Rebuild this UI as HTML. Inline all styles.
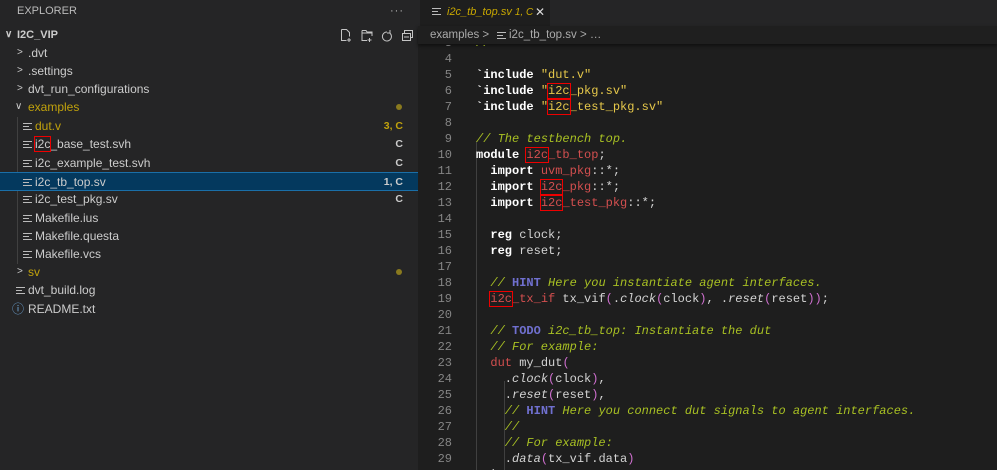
<!DOCTYPE html>
<html><head><meta charset="utf-8"><style>
*{margin:0;padding:0;box-sizing:border-box}
body{width:997px;height:470px;overflow:hidden;background:#1e1e1e;font-family:"Liberation Sans",sans-serif;position:relative}
#side{position:absolute;left:0;top:0;width:418px;height:470px;background:#252526;color:#cccccc;font-size:12px}
.row{position:absolute;left:0;width:418px;height:18px;line-height:18px;white-space:nowrap}
.row span.t{position:absolute}
.badge{position:absolute;right:15px;font-size:10.5px;font-weight:bold}
.dot{position:absolute;right:16px;top:6px;width:6px;height:6px;border-radius:50%;background:#8a7a1e}
.fi{position:absolute;top:6px;width:9px;height:7px;border-top:1px solid #bbb;border-bottom:1px solid #bbb}
.fi:after{content:"";position:absolute;left:0;top:2px;width:6px;height:1px;background:#bbb}
.chev{position:absolute;font-size:10px;color:#ccc}
.box{outline:1.5px solid #e00;outline-offset:0}
#ed{position:absolute;left:418px;top:0;right:0;bottom:0;background:#1e1e1e}
#tabs{position:absolute;left:0;top:0;right:0;height:26px;background:#252526}
#tab{position:absolute;left:2px;top:0;width:130px;height:26px;background:#1e1e1e;font-size:11px;line-height:24px;color:#c9a800}
#bc{position:absolute;left:0;top:26px;right:0;height:18px;background:#1f1f1f;font-size:11.5px;line-height:18px;color:#aaa;box-shadow:0 2px 3px #111}
#code{position:absolute;left:0;top:45px;right:0;bottom:0;overflow:hidden;font-family:"Liberation Mono",monospace;font-size:12px}
.l{position:absolute;left:0;width:579px;height:16px;line-height:16px;white-space:pre;color:#d4d4d4}
.n{position:absolute;left:0;width:34px;text-align:right;color:#858585}
.c{position:absolute;left:58px}
.k{color:#fff;font-weight:bold}
.s{color:#e6c84a}
.cm{color:#a8c023;font-style:italic}
.h{color:#7070d0;font-style:normal;font-weight:bold}
.r{color:#d34f4f}
.p{color:#d070d0}
.i{font-style:italic;color:#d4d4d4}
.g{position:absolute;width:1px;background:#404040}
</style></head><body>
<div id="side">
 <div class="row" style="top:2px;font-size:11px;color:#bbb"><span class="t" style="left:17px">EXPLORER</span><span class="t" style="left:390px;letter-spacing:1px">···</span></div>
 <div class="row" style="top:26px;font-size:11px;font-weight:bold"><span class="chev" style="left:5px">∨</span><span class="t" style="left:17px">I2C_VIP</span>
  <svg style="position:absolute;left:340px;top:3px" width="75" height="13" viewBox="0 0 75 13" fill="none" stroke="#c5c5c5" stroke-width="1"><path d="M1.5 .5h5l3 3v4M1.5.5v11h5M9 9v4M7 11h4"/><path d="M22 1.5h4l1 1.5h5v4M22 1.5v10h5M29.5 9v4M27.5 11h4M22 4h10"/><path d="M47 3a4.5 4.5 0 1 0 3 1.2M50 1v3h-3"/><path d="M62.5 4.5h8v7h-8zM64.5 4.5v-3h8v7h-2M64 8h5"/></svg></div>
 <div class="row" style="top:44px"><span class="chev" style="left:17px">&gt;</span><span class="t" style="left:28px">.dvt</span></div>
 <div class="row" style="top:62px"><span class="chev" style="left:17px">&gt;</span><span class="t" style="left:28px">.settings</span></div>
 <div class="row" style="top:80px"><span class="chev" style="left:17px">&gt;</span><span class="t" style="left:28px">dvt_run_configurations</span></div>
 <div class="row" style="top:98px;color:#c1a20c"><span class="chev" style="left:15px;color:#ccc">∨</span><span class="t" style="left:28px">examples</span><span class="dot"></span></div>
 <div class="g" style="left:17px;top:117px;height:147px"></div>
 <div class="row" style="top:117px;color:#c1a20c"><span class="fi" style="left:23px"></span><span class="t" style="left:35px">dut.v</span><span class="badge" style="color:#c1a20c">3, C</span></div>
 <div class="row" style="top:135px"><span class="fi" style="left:23px"></span><span class="t" style="left:35px"><span class="box">i2c</span>_base_test.svh</span><span class="badge">C</span></div>
 <div class="row" style="top:154px"><span class="fi" style="left:23px"></span><span class="t" style="left:35px">i2c_example_test.svh</span><span class="badge">C</span></div>
 <div class="row" style="top:172px;height:19px;background:#04395e;border-top:1px solid #1a6fa8;border-bottom:1px solid #1a6fa8"><span class="fi" style="left:23px"></span><span class="t" style="left:35px">i2c_tb_top.sv</span><span class="badge">1, C</span></div>
 <div class="row" style="top:190px"><span class="fi" style="left:23px"></span><span class="t" style="left:35px">i2c_test_pkg.sv</span><span class="badge">C</span></div>
 <div class="row" style="top:209px"><span class="fi" style="left:23px"></span><span class="t" style="left:35px">Makefile.ius</span></div>
 <div class="row" style="top:227px"><span class="fi" style="left:23px"></span><span class="t" style="left:35px">Makefile.questa</span></div>
 <div class="row" style="top:245px"><span class="fi" style="left:23px"></span><span class="t" style="left:35px">Makefile.vcs</span></div>
 <div class="row" style="top:263px;color:#c1a20c"><span class="chev" style="left:17px;color:#ccc">&gt;</span><span class="t" style="left:28px">sv</span><span class="dot"></span></div>
 <div class="row" style="top:281px"><span class="fi" style="left:16px"></span><span class="t" style="left:28px">dvt_build.log</span></div>
 <div class="row" style="top:300px"><span class="t" style="left:12px;font-size:12px;color:#6fa8dc">ⓘ</span><span class="t" style="left:28px">README.txt</span></div>
</div>
<div id="ed">
 <div id="tabs"><div id="tab"><span class="fi" style="left:12px;top:8px"></span><span style="position:absolute;left:27px;font-style:italic">i2c_tb_top.sv <span style="font-size:10px">1, C</span></span><span style="position:absolute;left:115px;color:#ddd;font-size:12px">✕</span></div></div>
 <div id="bc"><span style="position:absolute;left:12px">examples &gt;</span><span class="fi" style="left:79px;top:6px"></span><span style="position:absolute;left:91px">i2c_tb_top.sv &gt; …</span></div>
 <div id="code">
  <div class="g" style="left:58px;top:96px;height:340px"></div>
  <div class="g" style="left:86px;top:336px;height:90px"></div>
  <div class="l" style="top:-10px"><span class="n">3</span><span class="c cm">//</span></div>
  <div class="l" style="top:6px"><span class="n">4</span></div>
  <div class="l" style="top:22px"><span class="n">5</span><span class="c"><span class="k">`include</span> <span class="s">"dut.v"</span></span></div>
  <div class="l" style="top:38px"><span class="n">6</span><span class="c"><span class="k">`include</span> <span class="s">"<span class="box">i2c</span>_pkg.sv"</span></span></div>
  <div class="l" style="top:54px"><span class="n">7</span><span class="c"><span class="k">`include</span> <span class="s">"<span class="box">i2c</span>_test_pkg.sv"</span></span></div>
  <div class="l" style="top:70px"><span class="n">8</span></div>
  <div class="l" style="top:86px"><span class="n">9</span><span class="c cm">// The testbench top.</span></div>
  <div class="l" style="top:102px"><span class="n">10</span><span class="c"><span class="k">module</span> <span class="r"><span class="box">i2c</span>_tb_top</span>;</span></div>
  <div class="l" style="top:118px"><span class="n">11</span><span class="c">  <span class="k">import</span> <span class="r">uvm_pkg</span>::*;</span></div>
  <div class="l" style="top:134px"><span class="n">12</span><span class="c">  <span class="k">import</span> <span class="r"><span class="box">i2c</span>_pkg</span>::*;</span></div>
  <div class="l" style="top:150px"><span class="n">13</span><span class="c">  <span class="k">import</span> <span class="r"><span class="box">i2c</span>_test_pkg</span>::*;</span></div>
  <div class="l" style="top:166px"><span class="n">14</span></div>
  <div class="l" style="top:182px"><span class="n">15</span><span class="c">  <span class="k">reg</span> clock;</span></div>
  <div class="l" style="top:198px"><span class="n">16</span><span class="c">  <span class="k">reg</span> reset;</span></div>
  <div class="l" style="top:214px"><span class="n">17</span></div>
  <div class="l" style="top:230px"><span class="n">18</span><span class="c cm">  // <span class="h">HINT</span> Here you instantiate agent interfaces.</span></div>
  <div class="l" style="top:246px"><span class="n">19</span><span class="c">  <span class="r"><span class="box">i2c</span>_tx_if</span> tx_vif<span class="p">(</span>.<span class="i">clock</span><span class="p">(</span>clock<span class="p">)</span>, .<span class="i">reset</span><span class="p">(</span>reset<span class="p">)</span><span class="p">)</span>;</span></div>
  <div class="l" style="top:262px"><span class="n">20</span></div>
  <div class="l" style="top:278px"><span class="n">21</span><span class="c cm">  // <span class="h">TODO</span> i2c_tb_top: Instantiate the dut</span></div>
  <div class="l" style="top:294px"><span class="n">22</span><span class="c cm">  // For example:</span></div>
  <div class="l" style="top:310px"><span class="n">23</span><span class="c">  <span class="r">dut</span> my_dut<span class="p">(</span></span></div>
  <div class="l" style="top:326px"><span class="n">24</span><span class="c">    .<span class="i">clock</span><span class="p">(</span>clock<span class="p">)</span>,</span></div>
  <div class="l" style="top:342px"><span class="n">25</span><span class="c">    .<span class="i">reset</span><span class="p">(</span>reset<span class="p">)</span>,</span></div>
  <div class="l" style="top:358px"><span class="n">26</span><span class="c cm">    // <span class="h">HINT</span> Here you connect dut signals to agent interfaces.</span></div>
  <div class="l" style="top:374px"><span class="n">27</span><span class="c cm">    //</span></div>
  <div class="l" style="top:390px"><span class="n">28</span><span class="c cm">    // For example:</span></div>
  <div class="l" style="top:406px"><span class="n">29</span><span class="c">    .<span class="i">data</span><span class="p">(</span>tx_vif.data<span class="p">)</span></span></div>
  <div class="l" style="top:422px"><span class="n">30</span><span class="c">  );</span></div>
 </div>
</div>
</body></html>
